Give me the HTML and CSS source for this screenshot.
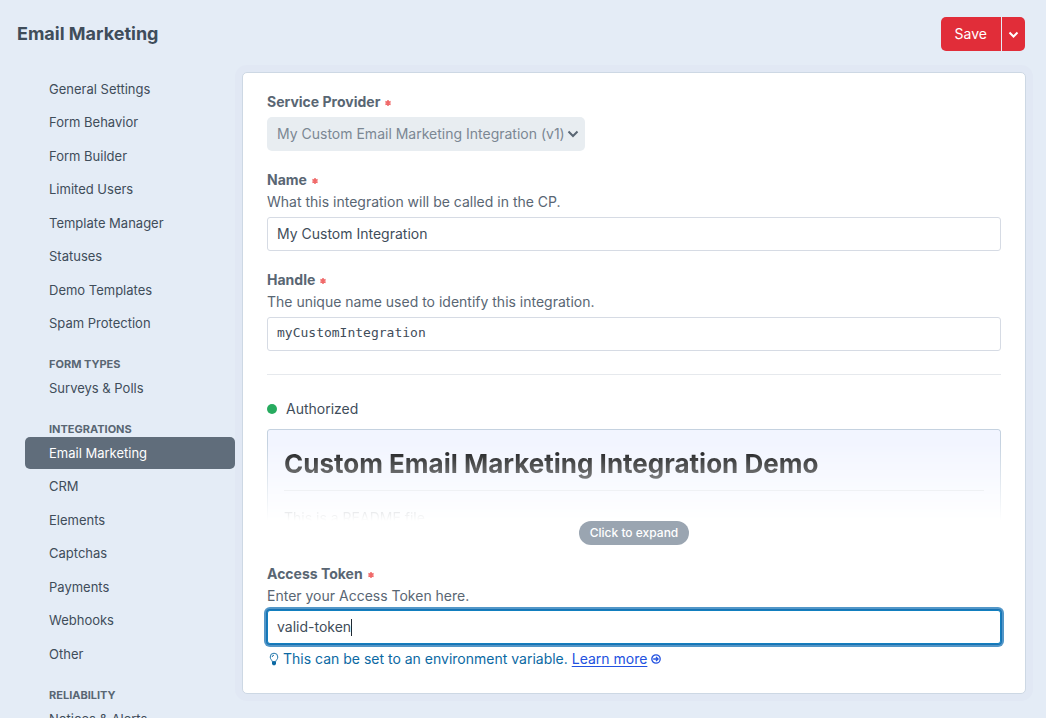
FILE: index.html
```html
<!DOCTYPE html>
<html lang="en">
<head>
<meta charset="utf-8">
<meta name="viewport" content="width=device-width, initial-scale=1">
<title>Email Marketing</title>
<link rel="stylesheet" href="styles.css">
</head>
<body>
<header class="page-header">
  <h1 class="page-title">Email Marketing</h1>
  <div class="btn-group">
    <button class="btn btn-save" type="submit" form="integration">Save</button>
    <button class="btn btn-menu" type="button" aria-label="More save options">
      <svg width="11" height="8" viewBox="0 0 11 8" fill="none" stroke="currentColor" stroke-width="2"><path d="M1.500 2.500 5.500 6.500 9.500 2.500"/></svg>
    </button>
  </div>
</header>
<div class="layout">
  <nav class="sidebar" aria-label="Settings">
    <ul class="nav-list">
      <li><a href="#">General Settings</a></li>
      <li><a href="#">Form Behavior</a></li>
      <li><a href="#">Form Builder</a></li>
      <li><a href="#">Limited Users</a></li>
      <li><a href="#">Template Manager</a></li>
      <li><a href="#">Statuses</a></li>
      <li><a href="#">Demo Templates</a></li>
      <li><a href="#">Spam Protection</a></li>
    </ul>
    <h2 class="nav-heading">Form Types</h2>
    <ul class="nav-list">
      <li><a href="#">Surveys &amp; Polls</a></li>
    </ul>
    <h2 class="nav-heading">Integrations</h2>
    <ul class="nav-list">
      <li><a href="#" class="active" aria-current="page">Email Marketing</a></li>
      <li><a href="#">CRM</a></li>
      <li><a href="#">Elements</a></li>
      <li><a href="#">Captchas</a></li>
      <li><a href="#">Payments</a></li>
      <li><a href="#">Webhooks</a></li>
      <li><a href="#">Other</a></li>
    </ul>
    <h2 class="nav-heading">Reliability</h2>
    <ul class="nav-list">
      <li><a href="#">Notices &amp; Alerts</a></li>
    </ul>
  </nav>
  <main class="content">
    <form class="panel" id="integration">
      <div class="field">
        <label class="label" for="provider">Service Provider <svg class="required" viewBox="0 0 8 8" aria-hidden="true"><path d="M4 1v6M1.4 2.5l5.2 3M6.6 2.5l-5.2 3"/></svg></label>
        <div class="select">
          <select id="provider" disabled><option>My Custom Email Marketing Integration (v1)</option></select>
          <svg class="select-arrow" width="12" height="8" viewBox="0 0 12 8" fill="none" stroke="currentColor" stroke-width="2"><path d="M1.500 1.500 6 6 10.500 1.500"/></svg>
        </div>
      </div>
      <div class="field">
        <label class="label" for="name">Name <svg class="required" viewBox="0 0 8 8" aria-hidden="true"><path d="M4 1v6M1.4 2.5l5.2 3M6.6 2.5l-5.2 3"/></svg></label>
        <p class="hint">What this integration will be called in the CP.</p>
        <input class="text" id="name" type="text" value="My Custom Integration">
      </div>
      <div class="field">
        <label class="label" for="handle">Handle <svg class="required" viewBox="0 0 8 8" aria-hidden="true"><path d="M4 1v6M1.4 2.5l5.2 3M6.6 2.5l-5.2 3"/></svg></label>
        <p class="hint">The unique name used to identify this integration.</p>
        <input class="text code" id="handle" type="text" value="myCustomIntegration">
      </div>
      <hr class="divider">
      <p class="status"><span class="dot"></span>Authorized</p>
      <div class="readme">
        <div class="readme-body">
          <h2 class="readme-title">Custom Email Marketing Integration Demo</h2>
          <p class="readme-text">This is a README file.</p>
        </div>
        <button class="expand" type="button">Click to expand</button>
      </div>
      <div class="field">
        <label class="label" for="token">Access Token <svg class="required" viewBox="0 0 8 8" aria-hidden="true"><path d="M4 1v6M1.4 2.5l5.2 3M6.6 2.5l-5.2 3"/></svg></label>
        <p class="hint">Enter your Access Token here.</p>
        <div class="token-box">
          <input class="text focused" id="token" type="text" value="valid-token">
          <span class="caret-track" aria-hidden="true"><span class="caret"></span></span>
        </div>
        <p class="tip">
          <svg class="bulb" width="10" height="14" viewBox="0 0 10 14" fill="none" stroke="currentColor"><path d="M3.200 9.500C3 8 1.200 7.200 1.200 5a3.800 3.800 0 0 1 7.600 0C8.800 7.200 7 8 6.800 9.500ZM3.200 5A1.800 1.800 0 0 1 5 3.200" stroke-width=".9"/><path d="M3 10h4v2L6 13.300H4L3 12Z" fill="currentColor" stroke="none"/></svg>
          <span>This can be set to an environment variable. <a href="#">Learn more</a></span>
          <svg class="go" width="10" height="10" viewBox="0 0 10 10" fill="none" stroke="currentColor" stroke-width="1.300"><circle cx="5" cy="5" r="4.200"/><path d="M2.200 5h4.600M5 2.900 7.100 5 5 7.100"/></svg>
        </p>
      </div>
    </form>
  </main>
</div>
</body>
</html>
```
FILE: styles.css
```css
* { box-sizing: border-box; }
body {
  margin: 0;
  background: #e4ecf6;
  color: #3f4d5a;
  font: 14px/20px Inter, "Liberation Sans", sans-serif;
}
html { overflow: hidden; }
h1, h2, p, ul { margin: 0; padding: 0; }
ul { list-style: none; }
button, input, select { font: inherit; color: inherit; }
svg { display: block; }

.page-header {
  display: flex;
  align-items: center;
  justify-content: space-between;
  padding: 17px 21px 21px 17px;
}
.page-title { font-size: 18px; line-height: 24px; font-weight: 700; }
.btn-group { display: flex; gap: 1px; }
.btn {
  display: flex;
  align-items: center;
  justify-content: center;
  height: 34px;
  padding: 0 14px;
  border: 0;
  background: #e12d39;
  color: #fff;
}
.btn-save { border-radius: 5px 0 0 5px; }
.btn-menu { padding: 0 6px; border-radius: 0 5px 5px 0; }

.layout { display: flex; align-items: flex-start; gap: 7px; padding: 0 20px 24px 25px; }
.sidebar { position: relative; z-index: 1; flex: 0 0 210px; padding-top: 1px; font-size: 13px; }
.nav-list li:nth-child(even) { margin: 1px 0 2px; }
.nav-list li:last-child { margin-bottom: 0; }
.nav-list a {
  display: block;
  padding: 6px 24px;
  border-radius: 5px;
  color: inherit;
  text-decoration: none;
}
.nav-list .active { background: #606d7b; color: #fff; }
.nav-heading {
  margin-top: 17px;
  padding: 0 24px;
  font-size: 11px;
  line-height: 16px;
  font-weight: 700;
  color: #596673;
  text-transform: uppercase;
}

.content { flex: 1; min-width: 0; }
.panel {
  padding: 19px 24px 24px;
  border: 1px solid #cdd8e4;
  border-radius: 5px;
  background: #fff;
  box-shadow: 0 0 0 7px #e1e8f4;
}
.field + .field { margin-top: 19px; }
.label { display: flex; align-items: center; gap: 4px; font-weight: 700; color: #596673; }
.required { width: 8px; height: 8px; margin-top: 2px; stroke: #f06a6a; stroke-width: 1.500; }
.hint { margin-top: 2px; color: #596673; }
.select { display: inline-flex; align-items: center; position: relative; margin-top: 5px; vertical-align: top; }
.select select {
  height: 34px;
  padding: 0 20px 0 10px;
  border: 0;
  border-radius: 5px;
  background: #e8edf1;
  color: #7b8793;
  opacity: 1;
  appearance: none;
}
.select-arrow { position: absolute; right: 6px; color: #596673; }
.text {
  display: block;
  width: 100%;
  height: 34px;
  margin-top: 5px;
  padding: 0 9px 1px;
  border: 1px solid #d6dbe4;
  border-radius: 3px;
  background: #fff;
}
.code { padding-bottom: 3px; font: 13px/20px "DejaVu Sans Mono", monospace; }
.token-box { display: grid; margin-top: 4px; }
.token-box > * { grid-area: 1 / 1; margin-top: 0; }
.focused { border-color: #127fbf; outline: 0; box-shadow: 0 0 0 1px #1973b4, 0 0 0 3px #5397c8; }
.caret-track { z-index: 1; align-self: center; padding-left: 84px; pointer-events: none; }
.caret { display: block; width: 1px; height: 17px; background: #1f2933; }

.divider { margin: 23px 0 24px; border: 0; border-top: 1px solid #e6e9ed; }
.status { display: flex; align-items: center; gap: 9px; }
.dot { width: 10px; height: 10px; border-radius: 50%; background: #27ab5f; }
.readme { margin: 10px 0 19px; text-align: center; }
.readme-body {
  height: 92px;
  overflow: hidden;
  padding: 16px 16px 0;
  border: 1px solid #c5d2e0;
  border-bottom: 0;
  border-radius: 3px 3px 0 0;
  background: #f2f5ff;
  text-align: left;
  -webkit-mask-image: linear-gradient(#000 15%, transparent);
  mask-image: linear-gradient(#000 15%, transparent);
}
.readme-title {
  padding-bottom: 8px;
  border-bottom: 1px solid #d5dbe2;
  font-size: 26px;
  line-height: 36px;
  font-weight: 700;
  color: #0b0c0e;
}
.readme-text { margin-top: 17px; }
.expand {
  height: 24px;
  padding: 0 11px;
  border: 0;
  border-radius: 12px;
  background: #9aa5b1;
  color: #fff;
  font-size: 12px;
  font-weight: 500;
  vertical-align: top;
}
.tip { display: flex; align-items: center; margin-top: 5px; padding-left: 2px; color: #0b69a3; }
.bulb { margin-right: 4px; }
.tip a { color: #2251e0; text-underline-offset: 2px; }
.go { margin-left: 4px; color: #2251e0; }
```
